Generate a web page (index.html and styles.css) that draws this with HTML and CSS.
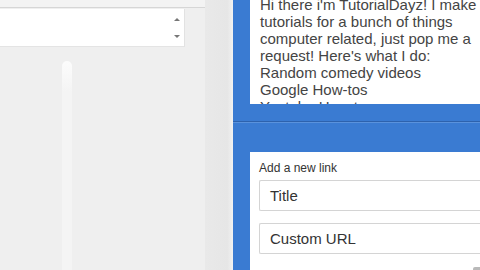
FILE: index.html
```html
<!DOCTYPE html>
<html lang="en">
<head>
    <meta charset="UTF-8">
    <title>Channel settings</title>
    <link rel="stylesheet" href="styles.css">
</head>
<body>
    <div class="page">
        <!-- Left settings column -->
        <div class="side">
            <div class="side-main">
                <div class="side-top"></div>
                <div class="mini-box">
                    <div class="mini-scroll">
                        <span class="arr up"></span>
                        <span class="arr down"></span>
                    </div>
                </div>
                <div class="track-wrap">
                    <div class="track"></div>
                </div>
            </div>
            <div class="side-edge"></div>
        </div>

        <!-- Blue about panel -->
        <div class="about">
            <div class="desc">
                <p class="desc-text">Hi there i'm TutorialDayz! I make<br>tutorials for a bunch of things<br>computer related, just pop me a<br>request! Here's what I do:<br>Random comedy videos<br>Google How-tos<br>Youtube How-tos</p>
            </div>
            <div class="divider"></div>
            <div class="link-box">
                <div class="link-label">Add a new link</div>
                <div class="field">Title</div>
                <div class="field">Custom URL</div>
                <div class="link-foot"><span class="btn-top"></span></div>
            </div>
        </div>
    </div>
</body>
</html>
```

FILE: styles.css
```css
html, body {
    margin: 0;
    padding: 0;
}
body {
    font-family: "Liberation Sans", Arial, sans-serif;
    background: #efefef;
    width: 480px;
    height: 270px;
    overflow: hidden;
}
.page {
    display: flex;
    height: 270px;
}

/* left column */
.side {
    width: 233px;
    display: flex;
    flex-shrink: 0;
}
.side-main {
    width: 205px;
    display: flex;
    flex-direction: column;
}
.side-top {
    height: 7px;
    background: #f3f3f3;
    border-bottom: 1px solid #d6d6d6;
}
.mini-box {
    height: 37px;
    width: 184px;
    margin-top: 1px;
    background: #fff;
    border-right: 1px solid #e2e2e2;
    border-bottom: 1px solid #e4e4e4;
    display: flex;
    justify-content: flex-end;
}
.mini-scroll {
    width: 14px;
    display: flex;
    flex-direction: column;
    justify-content: space-between;
    align-items: center;
    padding: 9px 0 8px;
}
.arr {
    width: 0;
    height: 0;
    border-left: 3px solid transparent;
    border-right: 3px solid transparent;
}
.arr.up { border-bottom: 3px solid #777; }
.arr.down { border-top: 3px solid #777; }
.track-wrap {
    flex: 1;
    padding: 14px 0 0 62px;
}
.track {
    width: 10px;
    height: 100%;
    background: linear-gradient(#fcfcfc 0, #f9f9f9 12px, #f4f4f4 30px, #f4f4f4);
    border-radius: 5px 5px 0 0;
}
.side-edge {
    flex: 1;
    background: linear-gradient(to right, #e9e9e9, #e6e6e6 80%, #f2f2f2);
}

/* blue panel */
.about {
    flex: 1;
    background: #3a7bd2;
    display: flex;
    flex-direction: column;
    padding-left: 17px;
    overflow: hidden;
}
.desc {
    height: 104px;
    background: #fff;
    overflow: hidden;
    width: 240px;
}
.desc-text {
    margin: -4px 0 0 10px;
    font-size: 15px;
    line-height: 17px;
    color: #444;
    white-space: nowrap;
}
.divider {
    height: 1px;
    background: #2d62ad;
    margin: 17px 0 0 -17px;
    box-shadow: 0 1px 0 #5a92dc;
}
.link-box {
    margin-top: 30px;
    flex: 1;
    background: #fff;
    width: 240px;
    padding: 10px 0 0 9px;
    display: flex;
    flex-direction: column;
}
.link-label {
    font-size: 12px;
    color: #333;
    line-height: 12px;
}
.field {
    margin-top: 6px;
    border: 1px solid #d4d4d4;
    border-right: 0;
    border-radius: 2px 0 0 2px;
    font-size: 15px;
    color: #333;
    line-height: 29px;
    padding-left: 10px;
    box-sizing: border-box;
    height: 31px;
}
.field + .field {
    margin-top: 12px;
}
.link-foot {
    flex: 1;
    display: flex;
    justify-content: flex-end;
    align-items: flex-end;
}
.btn-top {
    width: 26px;
    height: 3px;
    background: #b9b9b9;
    border-radius: 2px 0 0 0;
}
```
